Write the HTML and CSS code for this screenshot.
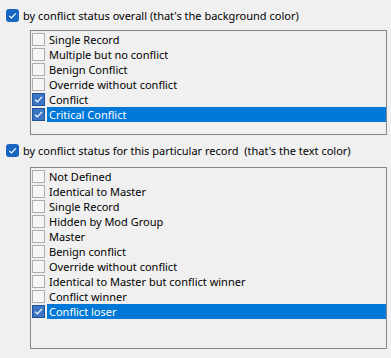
FILE: index.html
```html
<!DOCTYPE html>
<html lang="en">
<head>
  <meta charset="UTF-8" />
  <title>Conflict Status Filter</title>
  <link rel="stylesheet" href="styles.css">
</head>
<body>

  <div class="group">
    <label class="option">
      <span class="bigbox"><svg viewBox="0 0 13 13" width="13" height="13"><rect x="0" y="0" width="13" height="13" rx="3" fill="#1766c2"/><path d="M3.3 6.8 L5.5 9 L9.8 4.3" fill="none" stroke="#fff" stroke-width="1.2"/></svg></span>
      by conflict status overall (that's the background color)
    </label>
    <ul class="list first">
      <li><span class="box"></span>Single Record</li>
      <li><span class="box"></span>Multiple but no conflict</li>
      <li><span class="box"></span>Benign Conflict</li>
      <li><span class="box"></span>Override without conflict</li>
      <li><span class="box checked"></span>Conflict</li>
      <li class="selected"><span class="box checked"></span><span class="label">Critical Conflict</span></li>
    </ul>
  </div>

  <div class="group">
    <label class="option">
      <span class="bigbox"><svg viewBox="0 0 13 13" width="13" height="13"><rect x="0" y="0" width="13" height="13" rx="3" fill="#1766c2"/><path d="M3.3 6.8 L5.5 9 L9.8 4.3" fill="none" stroke="#fff" stroke-width="1.2"/></svg></span>
      by conflict status for this particular record&nbsp; (that's the text color)
    </label>
    <ul class="list second">
      <li><span class="box"></span>Not Defined</li>
      <li><span class="box"></span>Identical to Master</li>
      <li><span class="box"></span>Single Record</li>
      <li><span class="box"></span>Hidden by Mod Group</li>
      <li><span class="box"></span>Master</li>
      <li><span class="box"></span>Benign conflict</li>
      <li><span class="box"></span>Override without conflict</li>
      <li><span class="box"></span>Identical to Master but conflict winner</li>
      <li><span class="box"></span>Conflict winner</li>
      <li class="selected"><span class="box checked"></span><span class="label">Conflict loser</span></li>
    </ul>
  </div>

</body>
</html>
```

FILE: styles.css
```css
html, body {
  margin: 0;
  padding: 0;
  background-color: #f0f0f0;
  color: #000000;
  font-family: "Noto Sans", sans-serif;
  font-size: 11px;
  line-height: 15px;
}
.group {
  display: flex;
  flex-direction: column;
  padding-top: 9px;
}
.group + .group {
  padding-top: 9px;
}
.option {
  display: flex;
  align-items: center;
  height: 13px;
  padding-left: 6px;
  gap: 4px;
  white-space: nowrap;
}
.bigbox {
  display: flex;
  width: 13px;
  height: 13px;
}
.list {
  list-style: none;
  margin: 8px 4px 0 30px;
  padding: 1px 0 0 0;
  border: 1px solid #828790;
  background-color: #f0f0f0;
  box-sizing: border-box;
}
.group + .group .list {
  margin-top: 10px;
}
.first {
  height: 105px;
}
.second {
  height: 182px;
}
.list li {
  display: flex;
  align-items: center;
  height: 15px;
  padding-left: 1px;
  white-space: nowrap;
}
.box {
  width: 11px;
  height: 11px;
  border: 1px solid #adadad;
  background-color: #f6f6f6;
  margin-right: 4px;
  flex: none;
}
.box.checked {
  border-color: #1f5297;
  background: #3b76c4 url("data:image/svg+xml,%3Csvg xmlns='http://www.w3.org/2000/svg' viewBox='0 0 11 11'%3E%3Cpath d='M2 5.6 L4.3 7.9 L9 2.9' fill='none' stroke='%23ffffff' stroke-width='1.2'/%3E%3C/svg%3E") no-repeat center;
}
.label {
  flex: 1;
}
.selected .label {
  background-color: #0078d7;
  color: #ffffff;
  height: 15px;
  padding-left: 2px;
  margin-left: -2px;
}
```
